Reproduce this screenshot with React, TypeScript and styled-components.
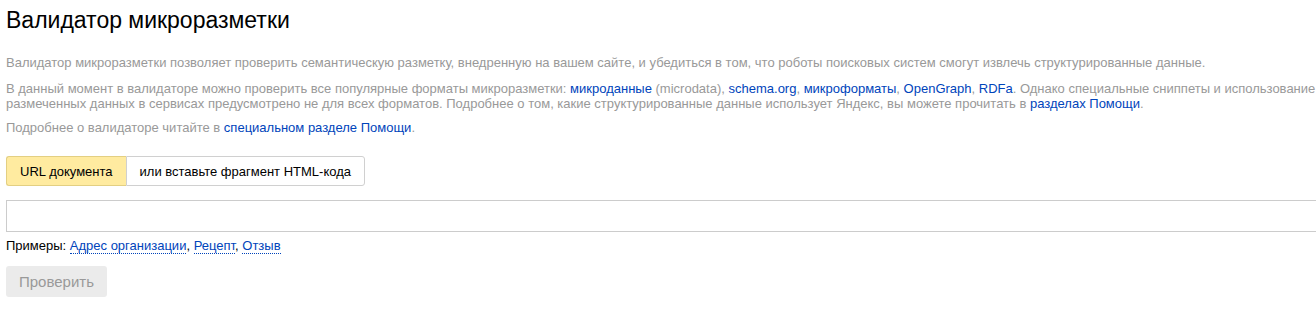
import React from 'react';
import styled, { createGlobalStyle } from 'styled-components';

const GlobalStyle = createGlobalStyle`
  html, body {
    margin: 0;
    padding: 0;
    background: #fff;
    overflow: hidden;
  }
  body {
    font-family: Arial, "Liberation Sans", sans-serif;
    color: #000;
  }
`;

const Page = styled.div`
  width: 1334px;
  padding: 7px 0 0 6px;
  box-sizing: border-box;
`;

const Title = styled.h1`
  margin: 0;
  font-size: 23px;
  line-height: 26px;
  font-weight: normal;
`;

const Intro = styled.div`
  margin-top: 22px;
  color: #999;
  font-size: 13px;
  line-height: 15px;
`;

const Paragraph = styled.p<{ $gap?: number }>`
  margin: 0 0 ${p => p.$gap ?? 10}px;
`;

const Link = styled.a`
  color: #04b;
  text-decoration: none;
`;

const Tabs = styled.div`
  display: flex;
  margin-top: 21px;
`;

const Tab = styled.button<{ $active?: boolean }>`
  height: 30px;
  padding: 0 13px;
  font-family: Arial, "Liberation Sans", sans-serif;
  font-size: 13px;
  color: #000;
  cursor: pointer;
  background: ${p => (p.$active ? '#ffeba0' : '#fff')};
  border: 1px solid ${p => (p.$active ? '#e3cf82' : '#d0d0d0')};
  border-radius: 0;
  &:first-child {
    border-radius: 3px 0 0 3px;
    border-right: none;
  }
  &:last-child {
    border-radius: 0 3px 3px 0;
  }
`;

const UrlInput = styled.input`
  display: block;
  width: 100%;
  height: 32px;
  margin-top: 14px;
  box-sizing: border-box;
  border: 1px solid #ccc;
  font-size: 13px;
  padding: 0 8px;
  outline: none;
`;

const Examples = styled.div`
  margin-top: 6px;
  font-size: 13px;
  line-height: 15px;
  color: #000;
`;

const PseudoLink = styled.a`
  color: #04b;
  text-decoration: none;
  border-bottom: 1px dotted #04b;
  cursor: pointer;
`;

const SubmitButton = styled.button`
  display: block;
  margin-top: 13px;
  height: 31px;
  padding: 0 13px;
  font-family: Arial, "Liberation Sans", sans-serif;
  font-size: 15px;
  color: #999;
  background: #ebebeb;
  border: none;
  border-radius: 3px;
`;

export default function App() {
  return (
    <>
      <GlobalStyle />
      <Page>
        <Title>Валидатор микроразметки</Title>
        <Intro>
          <Paragraph $gap={11}>
            Валидатор микроразметки позволяет проверить семантическую разметку, внедренную на вашем сайте, и
            убедиться в том, что роботы поисковых систем смогут извлечь структурированные данные.
          </Paragraph>
          <Paragraph $gap={9}>
            В данный момент в валидаторе можно проверить все популярные форматы микроразметки:{' '}
            <Link href="#">микроданные</Link> (microdata), <Link href="#">schema.org</Link>,{' '}
            <Link href="#">микроформаты</Link>, <Link href="#">OpenGraph</Link>, <Link href="#">RDFa</Link>. Однако
            специальные сниппеты и использование размеченных данных в сервисах предусмотрено не для всех форматов.
            Подробнее о том, какие структурированные данные использует Яндекс, вы можете прочитать в{' '}
            <Link href="#">разделах Помощи</Link>.
          </Paragraph>
          <Paragraph $gap={0}>
            Подробнее о валидаторе читайте в <Link href="#">специальном разделе Помощи</Link>.
          </Paragraph>
        </Intro>
        <Tabs>
          <Tab $active>URL документа</Tab>
          <Tab>или вставьте фрагмент HTML-кода</Tab>
        </Tabs>
        <UrlInput type="text" />
        <Examples>
          Примеры: <PseudoLink>Адрес организации</PseudoLink>, <PseudoLink>Рецепт</PseudoLink>,{' '}
          <PseudoLink>Отзыв</PseudoLink>
        </Examples>
        <SubmitButton disabled>Проверить</SubmitButton>
      </Page>
    </>
  );
}
